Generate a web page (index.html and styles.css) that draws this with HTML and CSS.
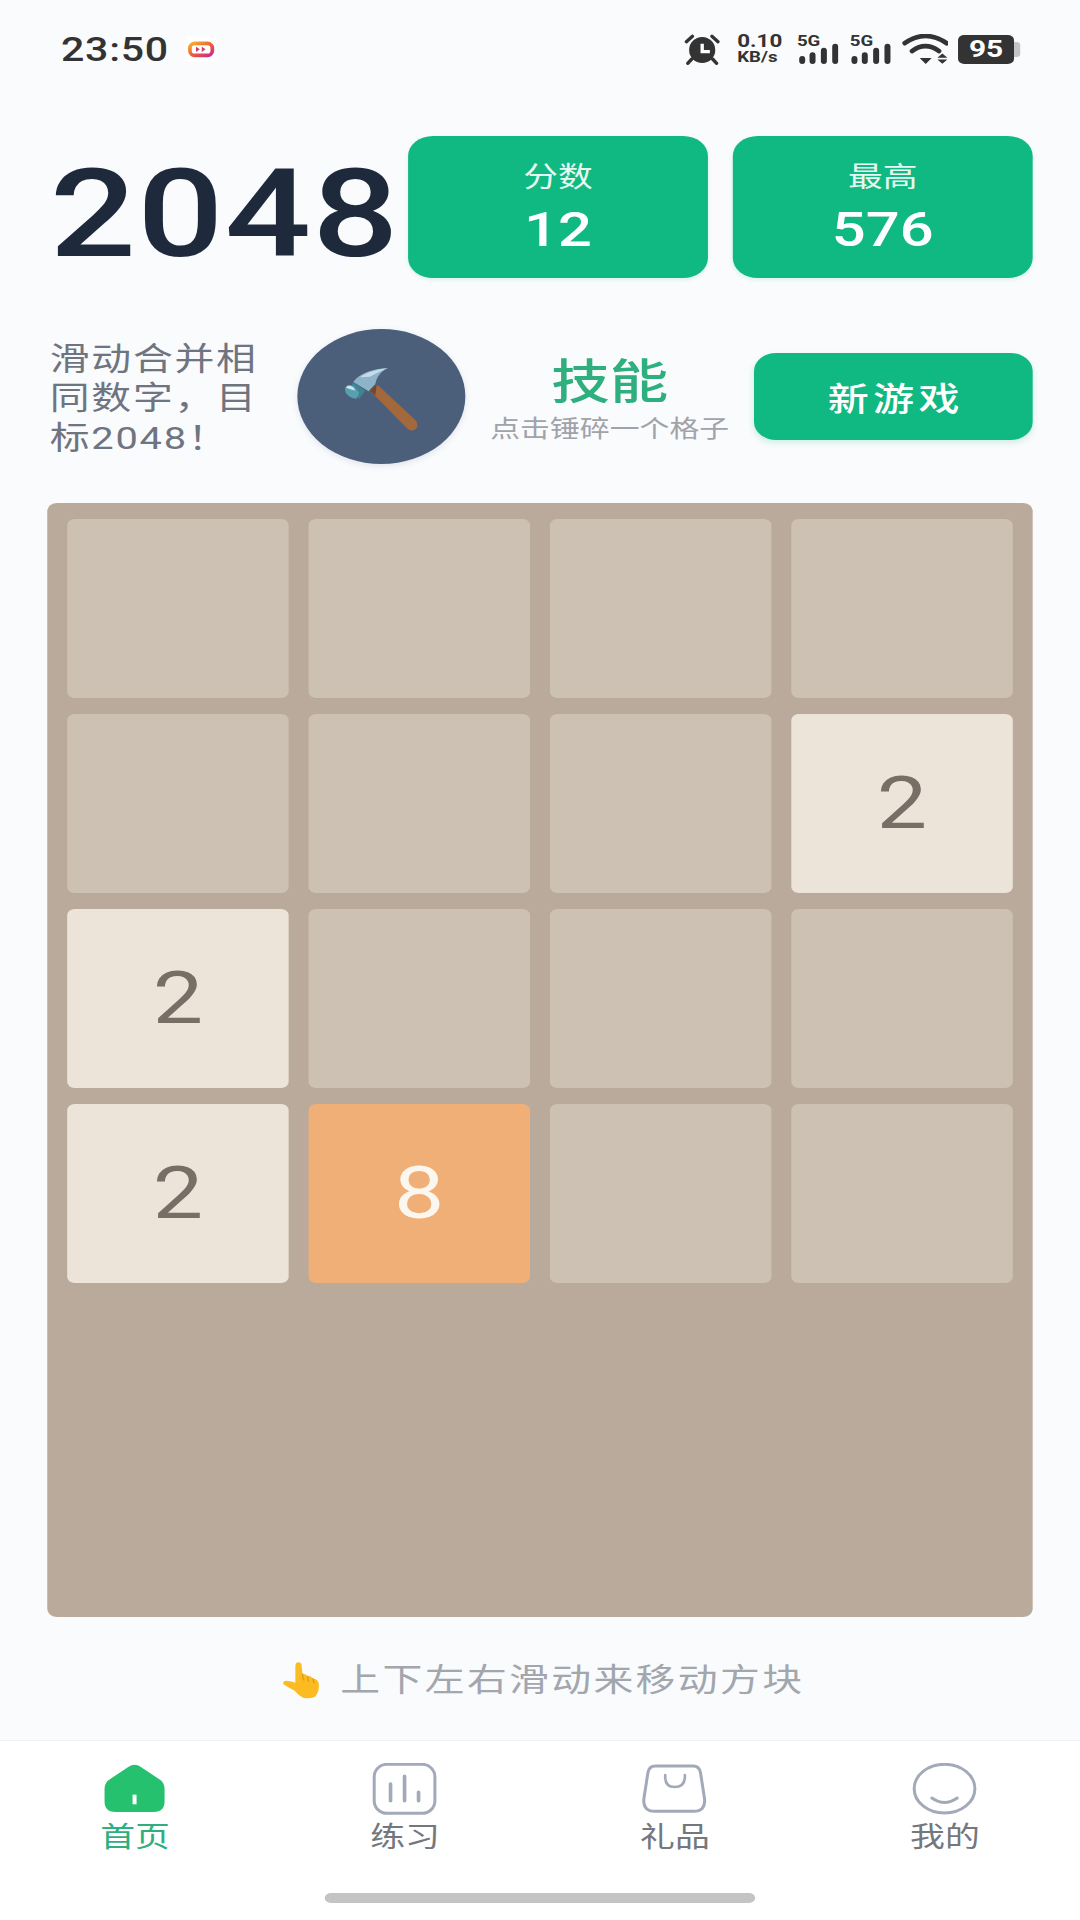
FILE: index.html
```html
<!DOCTYPE html>
<html lang="zh-CN">
<head>
<meta charset="utf-8">
<title>2048</title>
<link rel="stylesheet" href="styles.css">
</head>
<body>
<div class="app">
  <header class="status">
    <div class="status-left">
      <span class="clock">23:50</span>
      <svg class="app-badge" viewBox="0 0 99 78" preserveAspectRatio="none">
        <rect x="1" y="1" width="97" height="76" rx="12" fill="#fff"/>
        <defs><linearGradient id="bd" x1="0" y1="0" x2="1" y2="1"><stop offset="0" stop-color="#f5b32c"/><stop offset="0.55" stop-color="#ee5a3c"/><stop offset="1" stop-color="#c92a8c"/></linearGradient></defs>
        <rect x="17" y="22" width="66" height="36" rx="14" fill="none" stroke="url(#bd)" stroke-width="11"/>
        <path d="M35 32 L46 40 L35 48 Z M52 32 L63 40 L52 48 Z" fill="#d8365e"/>
      </svg>
    </div>
    <div class="status-right">
      <svg class="ic-alarm" viewBox="40 36 115 96" preserveAspectRatio="none">
        <circle cx="97" cy="87" r="39" fill="#333"/>
        <path d="M97 68 V92 H120" fill="none" stroke="#fff" stroke-width="10"/>
        <path d="M50 62 L68 46 M126 46 L144 62 M66 114 L54 127 M128 114 L140 127" fill="none" stroke="#333" stroke-width="10" stroke-linecap="round"/>
      </svg>
      <div class="net"><span class="net-a">0.10</span><span class="net-b">KB/s</span></div>
      <div class="signal">
        <span class="sig-label">5G</span>
        <svg class="sig-bars" viewBox="385 40 125 92" preserveAspectRatio="none">
          <path d="M399 114 V120 M430 103 V120 M464 90 V120 M498 78 V120" stroke="#333" stroke-width="18" stroke-linecap="round" fill="none"/>
        </svg>
      </div>
      <div class="signal">
        <span class="sig-label">5G</span>
        <svg class="sig-bars" viewBox="385 40 125 92" preserveAspectRatio="none">
          <path d="M399 114 V120 M430 103 V120 M464 90 V120 M498 78 V120" stroke="#333" stroke-width="18" stroke-linecap="round" fill="none"/>
        </svg>
      </div>
      <svg class="ic-wifi" viewBox="695 38 140 94" preserveAspectRatio="none">
        <path d="M703 66 Q765 22 829 66 M725 90 Q765 60 806 90" fill="none" stroke="#333" stroke-width="14" stroke-linecap="round"/>
        <path d="M748 111 H784 L766 129 Z M816 97 L831 110 H801 Z M801 115 H831 L816 128 Z" fill="#333"/>
      </svg>
      <div class="battery">
        <span class="battery-body">95</span>
        <span class="battery-nub"></span>
      </div>
    </div>
  </header>

  <main class="main">
    <section class="top">
      <h1 class="title">2048</h1>
      <div class="scores">
        <div class="score"><span class="score-label">分数</span><span class="score-value">12</span></div>
        <div class="score"><span class="score-label">最高</span><span class="score-value">576</span></div>
      </div>
    </section>

    <section class="tools">
      <p class="intro">滑动合并相同数字，目标2048！</p>
      <div class="hammer">
        <svg class="hammer-art" viewBox="55 27 502 405" preserveAspectRatio="none">
          <path d="M268 208 L296 196 L410 302 Q418 318 408 328 Q396 336 384 326 Z" fill="#a3683c"/>
          <path d="M268 208 L292 196 L288 226 Z" fill="#73482d"/>
          <path d="M222 186 C240 160 280 146 326 144 C302 156 292 172 288 192 L268 214 Z" fill="#8db3c8"/>
          <path d="M242 172 C264 156 294 148 322 145 C300 156 284 164 272 170 Z" fill="#c2dde9"/>
          <path d="M222 186 L258 212 L240 236 L212 206 Z" fill="#3d8494"/>
          <path d="M198 204 C202 192 216 194 226 200 L240 218 L232 236 C216 236 194 224 198 204 Z" fill="#5a9fb0"/>
          <path d="M200 202 C206 194 216 196 224 204 L228 212 C216 208 206 206 200 202 Z" fill="#cfe6ee"/>
        </svg>
      </div>
      <div class="skill">
        <span class="skill-title">技能</span>
        <span class="skill-sub">点击锤碎一个格子</span>
      </div>
      <button class="new-game">新游戏</button>
    </section>

    <section class="board">
      <div class="cell"></div><div class="cell"></div><div class="cell"></div><div class="cell"></div>
      <div class="cell"></div><div class="cell"></div><div class="cell"></div><div class="cell t2">2</div>
      <div class="cell t2">2</div><div class="cell"></div><div class="cell"></div><div class="cell"></div>
      <div class="cell t2">2</div><div class="cell t8">8</div><div class="cell"></div><div class="cell"></div>
    </section>

    <div class="hint">
      <svg class="hint-hand" viewBox="35 33 118 114" preserveAspectRatio="none">
        <path d="M86 37 Q96 37 96 50 L98 72 Q108 70 113 79 Q123 76 129 86 Q141 85 146 98 Q150 122 136 140 Q116 148 100 143 Q86 136 75 122 Q55 113 42 103 Q37 95 48 92 Q62 92 77 98 L77 50 Q77 37 86 37 Z" fill="#fdbb22"/>
        <path d="M98 72 Q99 84 102 90 M113 79 Q114 88 116 94 M129 86 Q130 92 132 98" fill="none" stroke="#e39b12" stroke-width="4" stroke-linecap="round"/>
      </svg>
      <span class="hint-text">上下左右滑动来移动方块</span>
    </div>
  </main>

  <nav class="nav">
    <div class="tabs">
      <div class="tab active">
        <svg class="tab-icon" viewBox="30 40 210 160" preserveAspectRatio="none">
          <path d="M116 52 Q135 38 154 52 L208 88 Q225 98 225 118 V155 Q225 187 193 187 H77 Q45 187 45 155 V118 Q45 98 62 88 Z" fill="#25c16f"/>
          <rect x="129" y="135" width="12" height="29" fill="#fff"/>
        </svg>
        <span class="tab-label">首页</span>
      </div>
      <div class="tab">
        <svg class="tab-icon" viewBox="840 40 210 160" preserveAspectRatio="none">
          <rect x="854" y="44" width="182" height="147" rx="38" fill="none" stroke="#a2a9b8" stroke-width="9"/>
          <path d="M903 103 V153 M945 80 V153 M987 128 V153" fill="none" stroke="#a2a9b8" stroke-width="11" stroke-linecap="round"/>
        </svg>
        <span class="tab-label">练习</span>
      </div>
      <div class="tab">
        <svg class="tab-icon" viewBox="30 40 210 160" preserveAspectRatio="none">
          <path d="M78 49 H190 Q210 49 213 70 L225 148 Q228 185 192 185 H76 Q40 185 43 148 L55 70 Q58 49 78 49 Z" fill="none" stroke="#a2a9b8" stroke-width="9"/>
          <path d="M107 76 V84 Q108 112 135 112 Q164 112 166 84 V76" fill="none" stroke="#a2a9b8" stroke-width="8" stroke-linecap="round"/>
        </svg>
        <span class="tab-label">礼品</span>
      </div>
      <div class="tab">
        <svg class="tab-icon" viewBox="840 40 210 160" preserveAspectRatio="none">
          <ellipse cx="945" cy="117" rx="91" ry="73" fill="none" stroke="#a2a9b8" stroke-width="9"/>
          <path d="M907 145 Q945 172 983 145" fill="none" stroke="#a2a9b8" stroke-width="9" stroke-linecap="round"/>
        </svg>
        <span class="tab-label">我的</span>
      </div>
    </div>
    <div class="home-bar"></div>
  </nav>
</div>
</body>
</html>
```

FILE: styles.css
```css
* { box-sizing: border-box; }

html, body {
  margin: 0;
  width: 1080px;
  height: 1920px;
  overflow: hidden;
  background: #fafbfd;
}

/* The source frame is 868 wide and shown stretched to 1080. */
.app {
  width: 868px;
  height: 1920px;
  display: flex;
  flex-direction: column;
  transform: scaleX(1.2442);
  transform-origin: 0 0;
  font-family: Roboto, "Noto Sans CJK SC", sans-serif;
  color: #1f2937;
}

/* status bar */
.status {
  height: 98px;
  flex: none;
  padding: 0 48px 0 49px;
  display: flex;
  align-items: center;
  justify-content: space-between;
}
.status-left { display: flex; align-items: center; gap: 12px; }
.clock { font-size: 33px; font-weight: 500; color: #333; letter-spacing: 0.6px; line-height: 1; }
.app-badge { width: 27px; height: 26px; display: block; }
.status-right { display: flex; align-items: center; }
.ic-alarm { width: 31px; height: 32px; margin-right: 13px; display: block; }
.net { display: flex; flex-direction: column; align-items: flex-start; width: 34px; margin-right: 14px; color: #333; font-weight: 700; line-height: 16px; }
.net-a { font-size: 18px; }
.net-b { font-size: 15px; }
.signal { position: relative; width: 33.5px; height: 31px; margin-right: 9px; }
.signal + .signal { margin-right: 8px; }
.sig-label { position: absolute; left: 0; top: -1px; font-size: 15px; font-weight: 700; line-height: 16px; color: #333; }
.sig-bars { width: 33.5px; height: 31px; display: block; }
.ic-wifi { width: 37.5px; height: 31px; margin-right: 8px; display: block; }
.battery { display: flex; align-items: center; }
.battery-body {
  width: 45px;
  height: 29px;
  background: #333;
  border-radius: 5px;
  color: #fff;
  font-size: 24px;
  font-weight: 700;
  line-height: 29px;
  text-align: center;
}
.battery-nub { width: 5px; height: 15px; background: #c2c4c8; border-radius: 0 3px 3px 0; }

/* main column */
.main {
  flex: 1;
  min-height: 0;
  padding: 38px 38px 0;
  display: flex;
  flex-direction: column;
}

.top { height: 142px; flex: none; display: flex; align-items: center; justify-content: space-between; }
.title { margin: 16px 0 0 2px; font-size: 122px; font-weight: 500; letter-spacing: 1px; line-height: 1; color: #1e293b; }
.scores { display: flex; gap: 20px; }
.score {
  width: 241px;
  height: 142px;
  border-radius: 20px;
  background: #10b981;
  color: #fff;
  display: flex;
  flex-direction: column;
  align-items: center;
  padding-top: 24px;
  box-shadow: 0 2px 4px rgba(16, 185, 129, 0.12);
}
.score-label { font-size: 28px; line-height: 36px; color: #e6f8f1; }
.score-value { font-size: 48px; font-weight: 500; line-height: 58px; margin-top: 5px; }

.tools { height: 135px; flex: none; margin-top: 51px; display: flex; align-items: center; gap: 20px; padding-left: 2px; }
.intro { width: 178.5px; flex: none; margin: 0; font-size: 32px; line-height: 39.5px; letter-spacing: 1.4px; color: #6f7580; padding-top: 5px; }
.hammer {
  width: 135px;
  height: 135px;
  flex: none;
  border-radius: 50%;
  background: #4c5f7a;
  box-shadow: 0 2px 6px rgba(76, 95, 122, 0.15);
}
.hammer-art { width: 135px; height: 135px; display: block; }
.skill { width: 191px; flex: none; margin-left: 1px; padding-top: 5px; display: flex; flex-direction: column; align-items: center; }
.skill-title { font-size: 47px; font-weight: 500; line-height: 56px; color: #2fae7e; }
.skill-sub { font-size: 24px; line-height: 30px; color: #a0a3a9; white-space: nowrap; margin-top: 4px; }
.new-game {
  width: 224px;
  height: 87px;
  flex: none;
  border: 0;
  border-radius: 18px;
  background: #10b981;
  color: #fff;
  font: 500 33px/1 Roboto, "Noto Sans CJK SC", sans-serif;
  letter-spacing: 3.5px;
  padding: 5px 0 0 5px;
  box-shadow: 0 3px 6px rgba(16, 185, 129, 0.18);
}

/* board */
.board {
  height: 1114px;
  flex: none;
  margin-top: 39px;
  padding: 16px;
  display: grid;
  grid-template-columns: repeat(4, 178px);
  grid-auto-rows: 179px;
  gap: 16px;
  background: #b9aa9b;
  border-radius: 8px;
}
.cell {
  background: #cdc1b3;
  border-radius: 6px;
  display: flex;
  align-items: center;
  justify-content: center;
  font-size: 72px;
  line-height: 1;
}
.t2 { background: #ece4d9; color: #776e65; }
.t8 { background: #f1af78; color: #fbf7ef; }

/* hint */
.hint { flex: 1; display: flex; align-items: center; justify-content: center; gap: 16px; padding: 3px 0 0 4px; }
.hint-hand { width: 32px; height: 38px; display: block; }
.hint-text { font-size: 32px; letter-spacing: 1.9px; line-height: 1.2; color: #a2a6ad; }

/* bottom nav */
.nav {
  height: 180px;
  flex: none;
  background: #fff;
  border-top: 1px solid #f0f1f4;
  padding-top: 22px;
  display: flex;
  flex-direction: column;
  align-items: center;
}
.tabs { width: 100%; display: grid; grid-template-columns: repeat(4, 1fr); }
.tab { display: flex; flex-direction: column; align-items: center; }
.tab-icon { width: 56.3px; height: 53.3px; display: block; }
.tab-label { font-size: 28px; line-height: 36px; color: #74777d; margin-top: 4px; }
.tab.active .tab-label { color: #2fae7e; }
.home-bar { width: 346px; height: 10px; margin-top: 37px; background: #c4c4c4; border-radius: 5px; }
```
